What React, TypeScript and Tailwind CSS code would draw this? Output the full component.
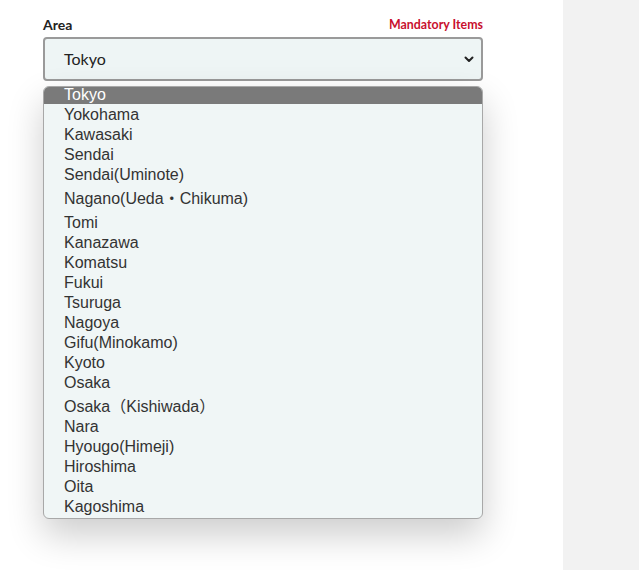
const areas = [
  "Tokyo",
  "Yokohama",
  "Kawasaki",
  "Sendai",
  "Sendai(Uminote)",
  "Nagano(Ueda・Chikuma)",
  "Tomi",
  "Kanazawa",
  "Komatsu",
  "Fukui",
  "Tsuruga",
  "Nagoya",
  "Gifu(Minokamo)",
  "Kyoto",
  "Osaka",
  "Osaka（Kishiwada）",
  "Nara",
  "Hyougo(Himeji)",
  "Hiroshima",
  "Oita",
  "Kagoshima",
];

function rowClass(area: string, i: number) {
  if (i === 0) return "h-[17px] bg-[#7a7a7a] pl-[20px] leading-[16px] text-white";
  if (area.startsWith("Nagano")) return "h-[28px] pl-[20px] pt-[5px] leading-[20px]";
  if (area.startsWith("Osaka（")) return "h-[24px] pl-[20px] pt-[5px] leading-[20px]";
  return "h-[20px] pl-[20px] pt-[1px] leading-[20px]";
}

export default function App() {
  return (
    <div className="flex h-[570px] w-[639px] overflow-hidden bg-white">
      <div className="w-[563px] shrink-0 bg-white pl-[43px] pt-[14px]">
        <div className="relative w-[440px]">
          <div className="flex h-[20px] items-center justify-between font-['Lato','Liberation_Sans',sans-serif]">
            <span className="text-[14px] font-bold text-[#222]">Area</span>
            <span className="mt-[3px] text-[12.4px] font-bold text-[#c8102e]">
              Mandatory Items
            </span>
          </div>

          <div className="mt-[3px] flex h-[44px] items-center justify-between rounded-[4px] border-2 border-[#9a9a9a] bg-[#eef5f5] pl-[19px] pr-[7px] font-['Lato','Liberation_Sans',sans-serif] text-[16px] text-[#222]">
            <span>Tokyo</span>
            <svg width="10" height="7" viewBox="0 0 10 7" fill="none">
              <path
                d="M1.5 1.5 L5 5 L8.5 1.5"
                stroke="#222"
                strokeWidth="2"
                strokeLinecap="round"
                strokeLinejoin="round"
              />
            </svg>
          </div>

          <ul className="absolute left-0 top-[72px] w-[440px] overflow-hidden rounded-[6px] border border-[#a8a8a8] bg-[#f0f6f6] pb-[2px] font-['Liberation_Sans',Arial,'Noto_Sans_CJK_JP',sans-serif] text-[16px] text-[#333] shadow-[0_16px_36px_rgba(0,0,0,0.2)]">
            {areas.map((area, i) => (
              <li key={area} className={rowClass(area, i)}>
                {area}
              </li>
            ))}
          </ul>
        </div>
      </div>
      <div className="flex-1 bg-[#f2f2f2]" />
    </div>
  );
}
